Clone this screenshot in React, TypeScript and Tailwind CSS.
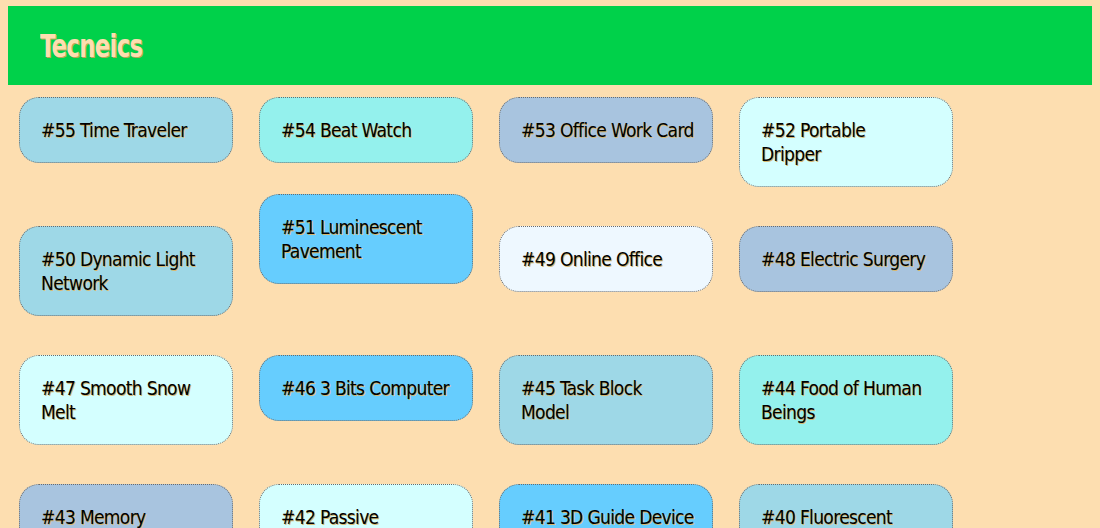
const cards = [
  { n: 55, lines: ["Time Traveler"], bg: "bg-[#9ed8e7]" },
  { n: 54, lines: ["Beat Watch"], bg: "bg-[#94f1ed]" },
  { n: 53, lines: ["Office Work Card"], bg: "bg-[#a8c4df]" },
  { n: 52, lines: ["Portable", "Dripper"], bg: "bg-[#d4ffff]" },
  { n: 50, lines: ["Dynamic Light", "Network"], bg: "bg-[#9ed8e7]" },
  { n: 51, lines: ["Luminescent", "Pavement"], bg: "bg-[#66cdfe]", up: true },
  { n: 49, lines: ["Online Office"], bg: "bg-[#eef8ff]" },
  { n: 48, lines: ["Electric Surgery"], bg: "bg-[#a8c4df]" },
  { n: 47, lines: ["Smooth Snow", "Melt"], bg: "bg-[#d4ffff]" },
  { n: 46, lines: ["3 Bits Computer"], bg: "bg-[#66cdfe]" },
  { n: 45, lines: ["Task Block", "Model"], bg: "bg-[#9ed8e7]" },
  { n: 44, lines: ["Food of Human", "Beings"], bg: "bg-[#94f1ed]" },
  { n: 43, lines: ["Memory", "Reinforcement"], bg: "bg-[#a8c4df]" },
  { n: 42, lines: ["Passive", "Refrigeration"], bg: "bg-[#d4ffff]" },
  { n: 41, lines: ["3D Guide Device"], bg: "bg-[#66cdfe]" },
  { n: 40, lines: ["Fluorescent", "Pathway"], bg: "bg-[#9ed8e7]" },
];

const font = "font-['DejaVu_Sans_Condensed','DejaVu_Sans',sans-serif] font-stretch-condensed";

export default function App() {
  return (
    <div className={`min-h-screen bg-[#fddeb0] px-2 pt-[6px] ${font}`}>
      <header className="flex h-[79px] items-center bg-[#00d14a] px-8">
        <h1 className="inline-block origin-left scale-x-[0.8] text-[32px] font-bold tracking-[-1px] text-[#fddeb0] [text-shadow:1px_1px_0_#b9a55a]">
          Tecneics
        </h1>
      </header>

      <div className="grid grid-cols-[repeat(4,214px)] auto-rows-[129px] gap-x-[26px] px-[11px] pt-3">
        {cards.map((c) => (
          <div
            key={c.n}
            className={`self-start whitespace-nowrap rounded-[20px] border border-dotted border-[#6b6b6b] py-[20px] pl-[21px] pr-[15px] text-[19px] leading-6 tracking-[-0.65px] text-black [text-shadow:1px_1px_0_#d8b870] ${c.bg} ${c.up ? "-mt-8" : ""}`}
          >
            {c.lines.map((l, i) => (
              <div key={i}>{i === 0 ? `#${c.n} ${l}` : l}</div>
            ))}
          </div>
        ))}
      </div>
    </div>
  );
}
